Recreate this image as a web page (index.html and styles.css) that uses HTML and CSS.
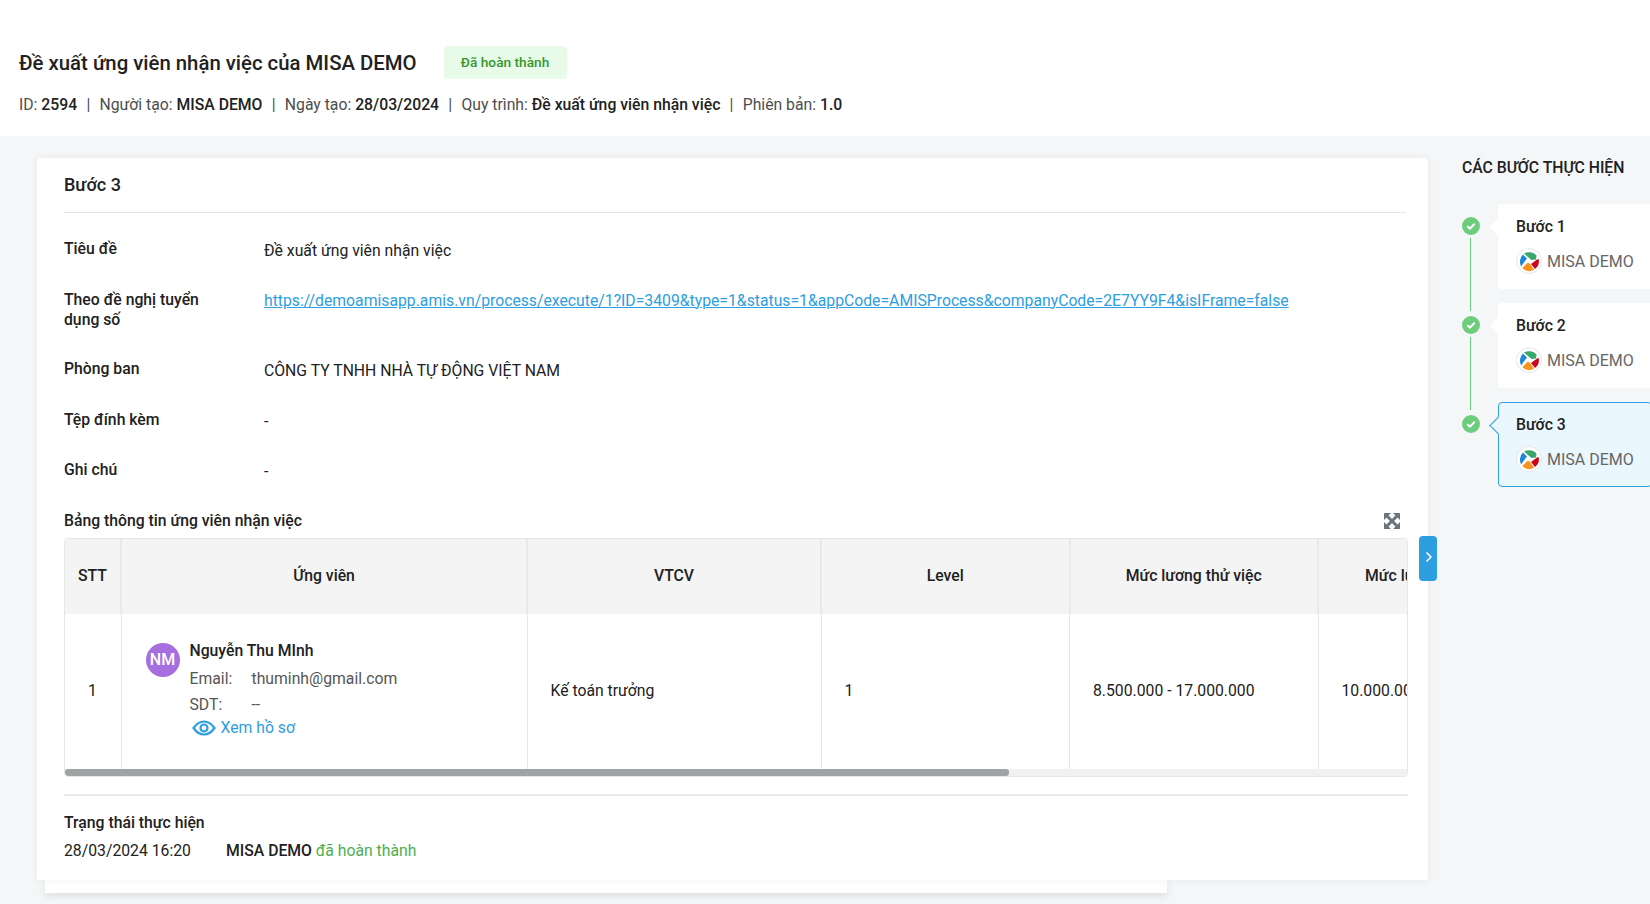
FILE: index.html
```html
<!DOCTYPE html>
<html lang="vi">
<head>
  <meta charset="UTF-8" />
  <title>Đề xuất ứng viên nhận việc</title>
  <link rel="stylesheet" href="styles.css">
</head>
<body>
  <svg class="defs" width="0" height="0">
    <symbol id="misa" viewBox="0 0 26 26">
      <circle cx="13" cy="13" r="12.5" fill="#fff" stroke="#e6e6e6" />
      <path d="M8 5.5 A10 10 0 0 1 20.5 7.5 L 20 11.5 L 15.5 12 L 12 9 Z" fill="#3aa76d" />
      <path d="M22.7 11 A10 10 0 0 1 19 21 L 15 16 L 21 11.5 Z" fill="#c9071c" />
      <path d="M18 21.8 A10 10 0 0 1 6.3 20 L 12 14.5 L 14.5 16.5 Z" fill="#f7931e" />
      <path d="M5.2 18.5 A10 10 0 0 1 7 6.5 L 11 10.5 L 7.5 15 Z" fill="#1e88d8" />
    </symbol>
    <symbol id="check" viewBox="0 0 18 18">
      <circle cx="9" cy="9" r="9" fill="#6cce7c" />
      <path d="M5.3 9.2 L7.9 11.6 L12.7 6.8" fill="none" stroke="#fff" stroke-width="2" />
    </symbol>
  </svg>

  <header class="page-head">
    <div class="title-row">
      <h1>Đề xuất ứng viên nhận việc của MISA DEMO</h1>
      <span class="badge">Đã hoàn thành</span>
    </div>
    <p class="meta">
      ID: <b>2594</b><i>|</i>Người tạo: <b>MISA DEMO</b><i>|</i>Ngày tạo: <b>28/03/2024</b><i>|</i>Quy trình: <b>Đề xuất ứng viên nhận việc</b><i>|</i>Phiên bản: <b>1.0</b>
    </p>
  </header>

  <main class="page-body">
    <div class="content">
      <section class="card">
        <h2>Bước 3</h2>

        <div class="field"><label>Tiêu đề</label><div class="value">Đề xuất ứng viên nhận việc</div></div>
        <div class="field field-tall"><label>Theo đề nghị tuyển dụng số</label><div class="value value-link"><a href="#">https://demoamisapp.amis.vn/process/execute/1?ID=3409&amp;type=1&amp;status=1&amp;appCode=AMISProcess&amp;companyCode=2E7YY9F4&amp;isIFrame=false</a></div></div>
        <div class="field"><label>Phòng ban</label><div class="value">CÔNG TY TNHH NHÀ TỰ ĐỘNG VIỆT NAM</div></div>
        <div class="field"><label>Tệp đính kèm</label><div class="value">-</div></div>
        <div class="field"><label>Ghi chú</label><div class="value">-</div></div>

        <div class="table-title">
          <span>Bảng thông tin ứng viên nhận việc</span>
          <svg class="expand" width="16" height="16" viewBox="0 0 16 16">
            <path d="M3 3 L13 13 M13 3 L3 13" stroke="#6b7280" stroke-width="3" />
            <path d="M0 0h7L0 7z M16 0v7L9 0z M0 16v-7L7 16z M16 16h-7L16 9z" fill="#6b7280" />
          </svg>
        </div>

        <div class="table-box">
          <div class="table-scroll">
            <table>
              <thead>
                <tr>
                  <th class="c-no">STT</th>
                  <th class="c-name">Ứng viên</th>
                  <th class="c-job">VTCV</th>
                  <th class="c-level">Level</th>
                  <th class="c-pay">Mức lương thử việc</th>
                  <th class="c-pay">Mức lương chính thức</th>
                </tr>
              </thead>
              <tbody>
                <tr>
                  <td class="cell-no">1</td>
                  <td class="cell-person">
                    <div class="person">
                      <span class="avatar">NM</span>
                      <div class="person-info">
                        <strong>Nguyễn Thu MInh</strong>
                        <div class="line"><span>Email:</span>thuminh@gmail.com</div>
                        <div class="line"><span>SDT:</span>--</div>
                        <a class="profile" href="#">
                          <svg width="24" height="16" viewBox="0 0 24 16" fill="none" stroke="#2d9ee0" stroke-width="2.2">
                            <path d="M1.5 8 C5 3 8.5 1.5 12 1.5 S19 3 22.5 8 C19 13 15.5 14.5 12 14.5 S5 13 1.5 8 Z" />
                            <circle cx="12" cy="8" r="3.5" />
                          </svg>
                          Xem hồ sơ
                        </a>
                      </div>
                    </div>
                  </td>
                  <td>Kế toán trưởng</td>
                  <td>1</td>
                  <td>8.500.000 - 17.000.000</td>
                  <td>10.000.000 - 20.000.000</td>
                </tr>
              </tbody>
            </table>
          </div>
          <div class="scrollbar"><div class="scroll-thumb"></div></div>
        </div>

        <div class="status">
          <h3>Trạng thái thực hiện</h3>
          <div class="status-row"><span class="status-time">28/03/2024 16:20</span><b>MISA DEMO</b> <em>đã hoàn thành</em></div>
        </div>

        <button class="toggle" type="button">
          <svg width="8" height="12" viewBox="0 0 8 12" fill="none" stroke="#fff" stroke-width="1.5"><path d="M1.5 1.5 L6 6 L1.5 10.5" /></svg>
        </button>
      </section>
      <div class="under-card"></div>
    </div>

    <aside class="steps">
      <h4>CÁC BƯỚC THỰC HIỆN</h4>
      <div class="step">
        <svg class="dot" width="18" height="18"><use href="#check" /></svg>
        <div class="step-card">
          <div class="step-name">Bước 1</div>
          <div class="step-user"><svg width="26" height="26"><use href="#misa" /></svg>MISA DEMO</div>
        </div>
      </div>
      <div class="step">
        <svg class="dot" width="18" height="18"><use href="#check" /></svg>
        <div class="step-card">
          <div class="step-name">Bước 2</div>
          <div class="step-user"><svg width="26" height="26"><use href="#misa" /></svg>MISA DEMO</div>
        </div>
      </div>
      <div class="step step-current">
        <svg class="dot" width="18" height="18"><use href="#check" /></svg>
        <div class="step-card">
          <div class="step-name">Bước 3</div>
          <div class="step-user"><svg width="26" height="26"><use href="#misa" /></svg>MISA DEMO</div>
        </div>
      </div>
    </aside>
  </main>
</body>
</html>
```

FILE: styles.css
```css
* {
  box-sizing: border-box;
}

html,
body {
  height: 100%;
}

body {
  margin: 0;
  display: flex;
  flex-direction: column;
  overflow: hidden;
  background: #f4f6f8;
  color: #212121;
  font-family: Roboto, "Noto Sans", sans-serif;
  font-size: 15.75px;
}

.defs {
  position: absolute;
}

/* Page header */
.page-head {
  height: 136px;
  padding: 46px 19px 0;
  background: #fff;
}

.title-row {
  display: flex;
  align-items: center;
  gap: 27px;
}

h1 {
  margin: 0;
  font-size: 20.35px;
  font-weight: 500;
}

.badge {
  width: 123px;
  height: 33px;
  line-height: 33px;
  text-align: center;
  border-radius: 4px;
  background: #e8fbe9;
  color: #37962f;
  font-size: 13.7px;
  font-weight: 500;
}

.meta {
  margin: 16px 0 0;
  line-height: 20px;
  color: #4d4d4d;
}

.meta b {
  color: #212121;
  font-weight: 500;
}

.meta i {
  margin: 0 9.25px;
  font-style: normal;
}

/* Main card */
.page-body {
  flex: 1;
  display: flex;
  min-height: 0;
  padding-top: 22px;
}

.content {
  width: 1425px;
  margin-left: 37px;
  flex: none;
}

.card {
  position: relative;
  width: 1391px;
  height: 722px;
  padding: 0 20px 0 27px;
  border-radius: 4px 4px 0 0;
  background: #fff;
  box-shadow: 0 0 8px rgba(0, 0, 0, 0.06);
}

.under-card {
  width: 1122px;
  height: 13px;
  margin-left: 8px;
  background: #fff;
  box-shadow: 0 3px 8px rgba(0, 0, 0, 0.1);
}

h2 {
  height: 55px;
  margin: 0 2px 26px 0;
  padding-top: 16px;
  border-bottom: 1px solid #e4e7e9;
  font-size: 18px;
  font-weight: 500;
  line-height: 22px;
}

.field {
  display: flex;
  min-height: 50.5px;
  line-height: 20px;
}

.field label {
  width: 200px;
  padding-right: 30px;
  flex: none;
  font-weight: 500;
}

.field-tall {
  min-height: 69.5px;
}

.value {
  padding-top: 2px;
}

.value-link {
  padding-top: 1px;
}

.field a {
  color: #2d9ee0;
}

.table-title {
  display: flex;
  justify-content: space-between;
  align-items: center;
  height: 24px;
  margin-top: -2.5px;
  font-weight: 500;
}

.expand {
  margin: 2px 8px 0 0;
}

.table-box {
  margin-top: 6px;
  border: 1px solid #e6e6e6;
  border-radius: 4px;
  overflow: hidden;
}

.table-scroll {
  overflow: hidden;
}

table {
  width: 1500px;
  table-layout: fixed;
  border-collapse: collapse;
}

th {
  height: 75px;
  padding-bottom: 4px;
  background: #f4f4f4;
  font-size: 15.75px;
  font-weight: 500;
  border-right: 2px solid #e9e9e9;
}

td {
  height: 155px;
  padding: 0 22px 3px 23px;
  border-right: 1px solid #e6e6e6;
}

.c-no {
  width: 56px;
}

.c-name {
  width: 406px;
}

.c-job {
  width: 294px;
}

.c-level {
  width: 248.5px;
}

.c-pay {
  width: 248.5px;
}

td.cell-no {
  padding-left: 23px;
}

td.cell-person {
  padding-left: 24px;
}

.person {
  display: flex;
  gap: 10px;
  margin-top: -2px;
}

.avatar {
  width: 34px;
  height: 34px;
  margin-top: 4px;
  flex: none;
  border-radius: 50%;
  background: #a56fe0;
  color: #fff;
  font-size: 16px;
  font-weight: 500;
  line-height: 34px;
  text-align: center;
}

.person-info strong {
  display: block;
  line-height: 24px;
  font-weight: 500;
}

.line {
  margin-top: 5px;
  line-height: 21px;
  color: #555;
}

.line span {
  display: inline-block;
  width: 62px;
}

.profile {
  display: flex;
  align-items: center;
  gap: 5px;
  margin: 2px 0 0 2px;
  color: #2d9ee0;
  line-height: 22px;
  text-decoration: none;
}

.scrollbar {
  height: 7px;
  background: #f1f1f1;
}

.scroll-thumb {
  width: 944px;
  height: 7px;
  border-radius: 3px;
  background: #9ea3a3;
}

.status {
  margin-top: 17px;
  padding-top: 16px;
  border-top: 2px solid #e8eaea;
}

h3 {
  margin: 0;
  font-size: 15.75px;
  font-weight: 500;
  line-height: 22px;
}

.status-row {
  margin-top: 6px;
  line-height: 22px;
}

.status-time {
  display: inline-block;
  width: 162px;
}

.status-row b {
  font-weight: 500;
}

.status-row em {
  font-style: normal;
  color: #4caf50;
}

.toggle {
  position: absolute;
  left: 1382px;
  top: 378px;
  width: 18px;
  height: 45px;
  padding: 0 0 0 1px;
  border: 0;
  border-radius: 4px;
  background: #2d9ee0;
}

/* Steps column */
.steps {
  flex: 1;
  min-width: 0;
  overflow: hidden;
}

h4 {
  margin: 1px 0 27px;
  font-size: 15.75px;
  font-weight: 500;
  line-height: 18px;
  white-space: nowrap;
}

.step {
  position: relative;
  display: flex;
  height: 85px;
  margin-bottom: 14px;
}

.dot {
  margin-top: 13px;
  flex: none;
}

.step:not(:last-child)::after {
  content: "";
  position: absolute;
  left: 8px;
  top: 34px;
  height: 73px;
  border-left: 1px solid #6cce7c;
}

.step-card {
  position: relative;
  width: 200px;
  height: 85px;
  margin-left: 18px;
  padding: 10.5px 18px;
  border-radius: 4px;
  background: #fff;
}

.step-card::before {
  content: "";
  position: absolute;
  left: -6px;
  top: 17px;
  width: 12px;
  height: 12px;
  transform: rotate(45deg);
  background: inherit;
}

.step-name {
  font-weight: 500;
  line-height: 24px;
}

.step-user {
  display: flex;
  align-items: center;
  gap: 5px;
  margin-top: 9.5px;
  color: #666;
  font-size: 16px;
  white-space: nowrap;
}

.step-current .step-card {
  border: 1px solid #2d9ee0;
  padding: 9.5px 17px;
  background: #ebf7fe;
}

.step-current .step-card::before {
  left: -7px;
  top: 16px;
  border-left: 1px solid #2d9ee0;
  border-bottom: 1px solid #2d9ee0;
}
```
